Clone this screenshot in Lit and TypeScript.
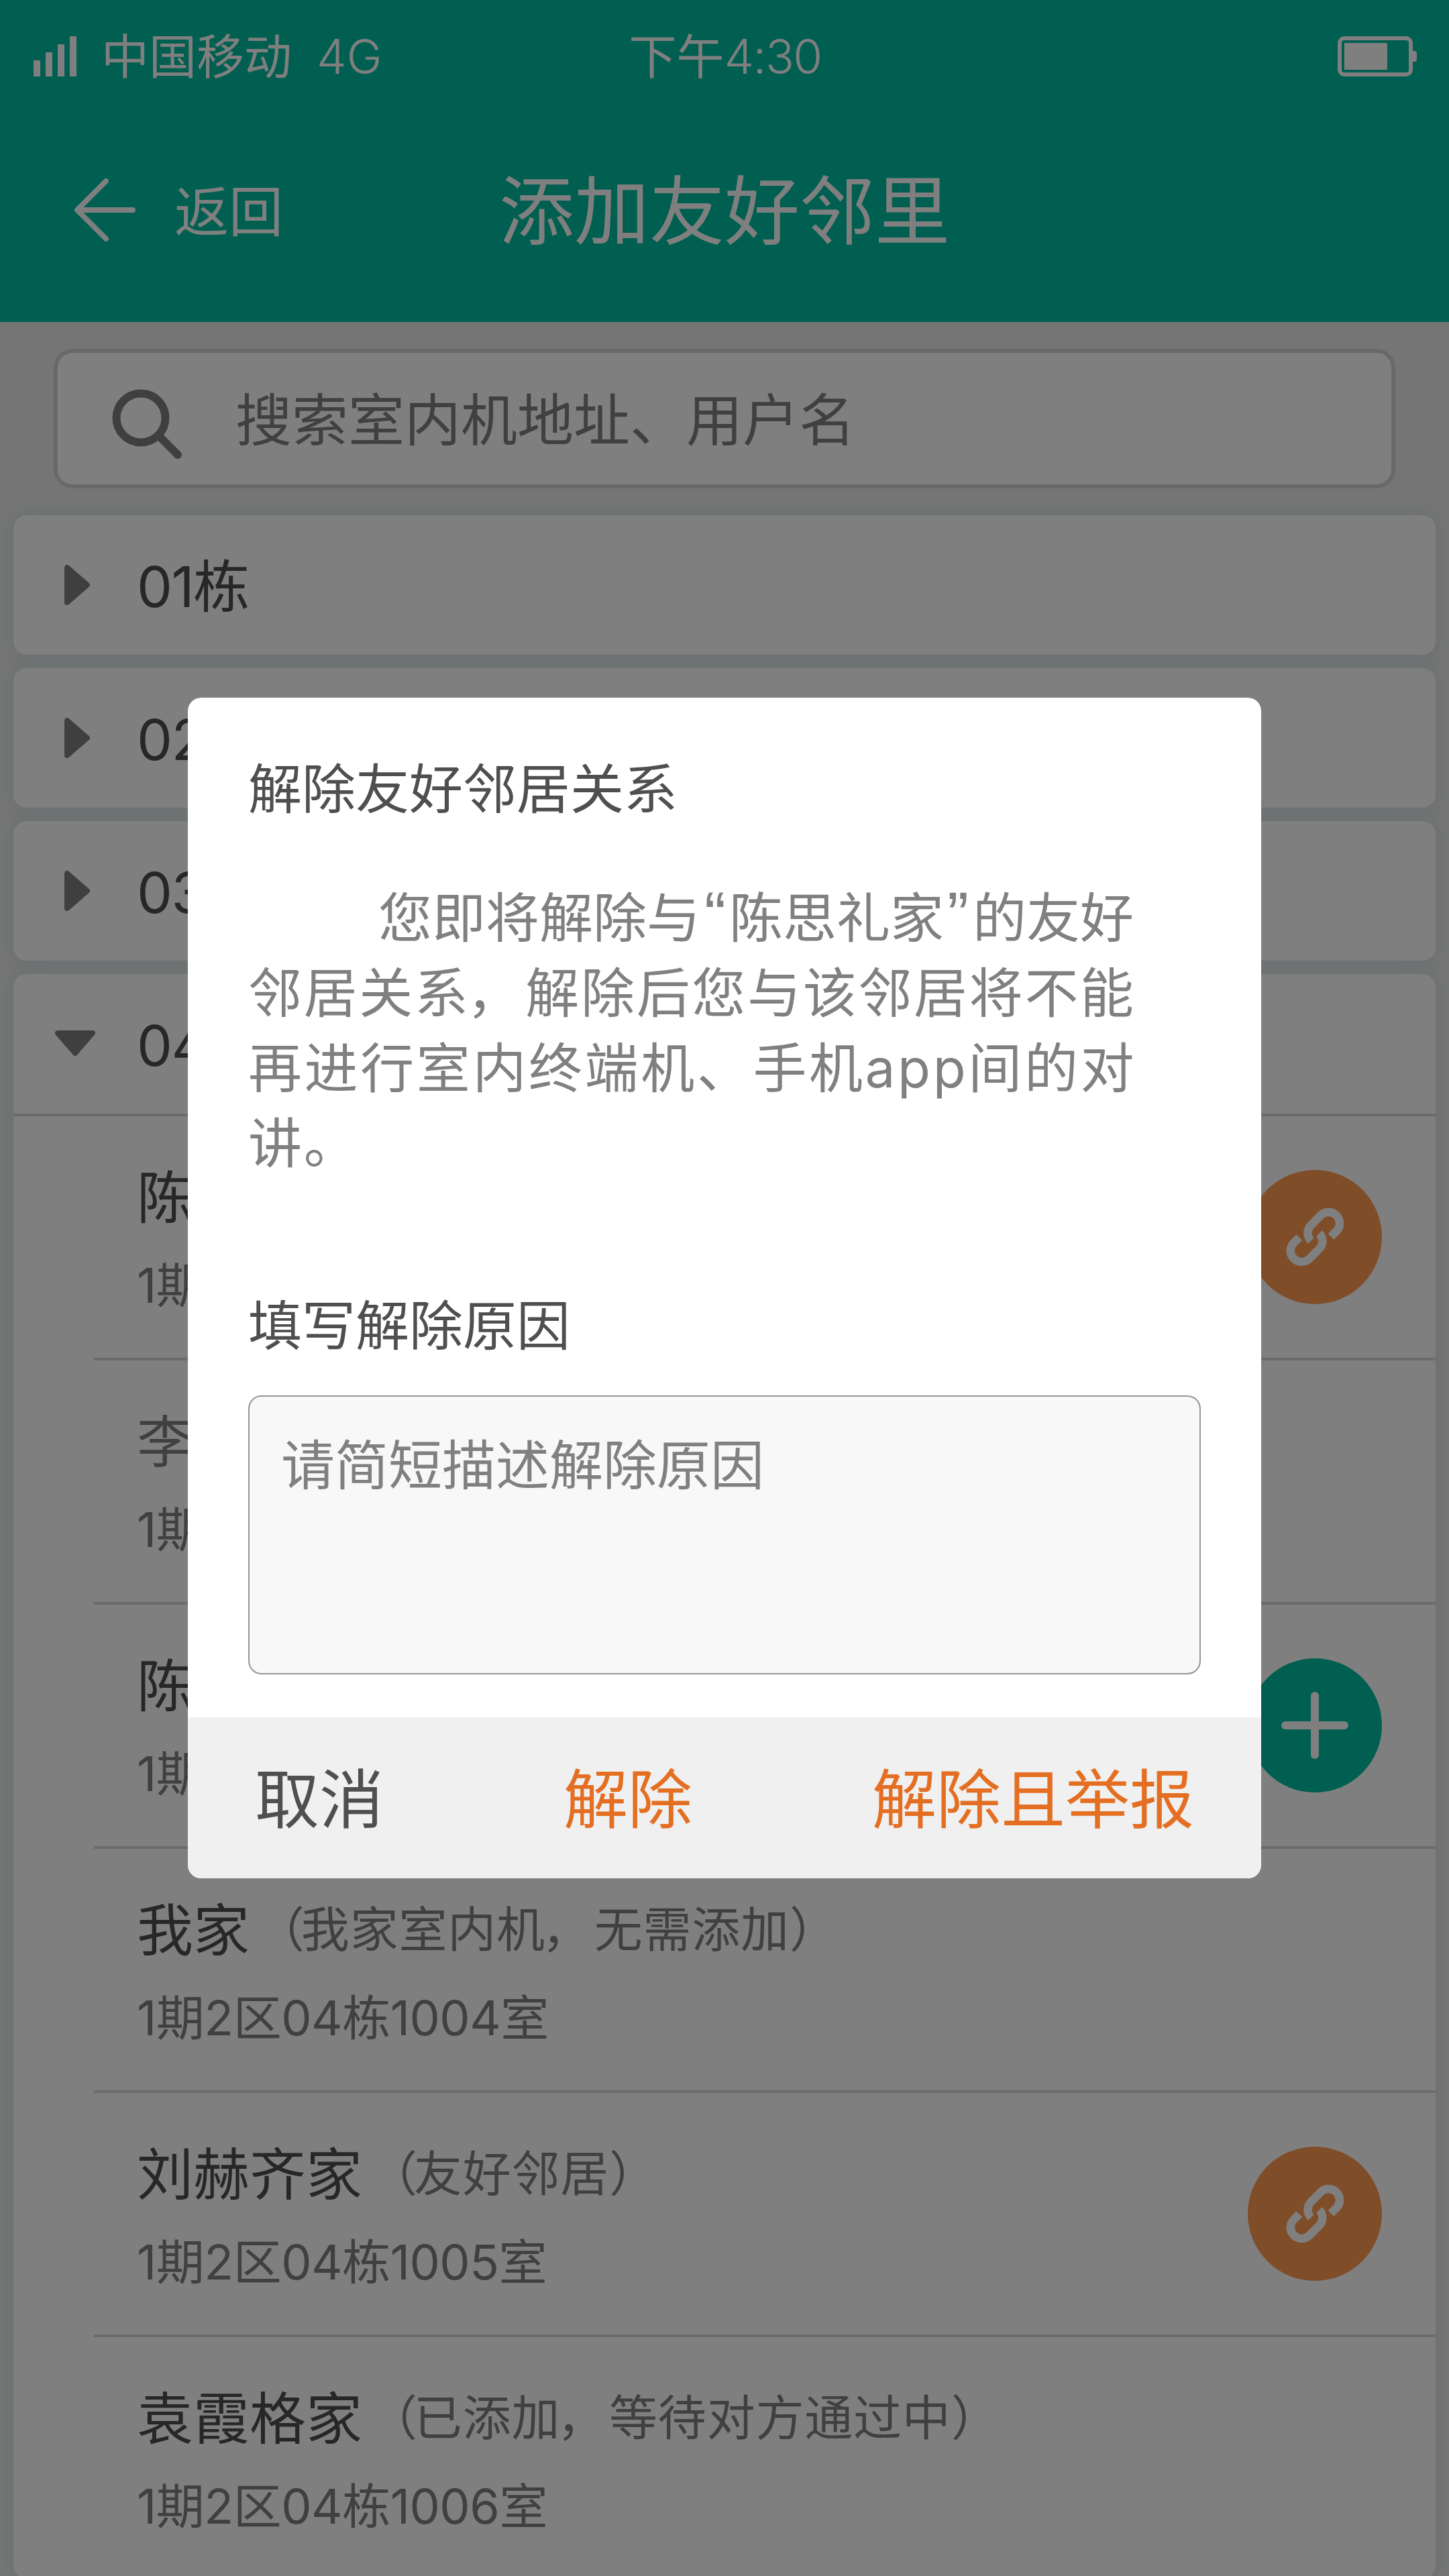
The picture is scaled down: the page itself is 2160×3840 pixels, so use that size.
import { LitElement, html, css, svg, nothing } from "lit";
import { customElement, property } from "lit/decorators.js";
import { classMap } from "lit/directives/class-map.js";

type Action = "link" | "add" | "none";

interface Neighbour {
  name: string;
  note?: string;
  room: string;
  muted?: boolean;
  action: Action;
}

const neighbours: Neighbour[] = [
  { name: "陈", room: "1期", action: "link" },
  { name: "李", room: "1期", muted: true, action: "none" },
  { name: "陈", room: "1期", action: "add" },
  { name: "我家", note: "（我家室内机，无需添加）", room: "1期2区04栋1004室", action: "none" },
  { name: "刘赫齐家", note: "（友好邻居）", room: "1期2区04栋1005室", action: "link" },
  { name: "袁霞格家", note: "（已添加，等待对方通过中）", room: "1期2区04栋1006室", action: "none" },
];

const linkHalf = "M94.3 105.7A16.6 16.6 0 0 1 94.3 82.3L109.7 66.9A16.6 16.6 0 0 1 133.1 90.3L124 99.4";

const punctuate = (text: string) =>
  text.split(/([（，])/).filter(Boolean).map((part) =>
    part === "（" ? html`<span class="open">（</span>`
      : part === "，" ? html`<span class="comma">，</span>`
      : part);

@customElement("round-action")
class RoundAction extends LitElement {
  static styles = css`
    :host { display: block; width: 200px; height: 200px; flex: none; }
    svg { display: block; width: 200px; height: 200px; }
    .link-bg { fill: #ff9a50; }
    .add-bg { fill: #00bfa0; }
    .stroke { fill: none; stroke: #fff; stroke-width: 12.4; }
    .round { stroke-linecap: round; stroke-width: 12; }
  `;
  @property() kind: Action = "link";

  render() {
    return html`<svg viewBox="0 0 200 200">
      ${this.kind === "link"
        ? svg`<circle class="link-bg" cx="100" cy="100" r="100"/>
            <path class="stroke" d=${linkHalf}/>
            <path class="stroke" d=${linkHalf} transform="rotate(180 100.4 100)"/>`
        : svg`<circle class="add-bg" cx="100" cy="100" r="100"/>
            <path class="stroke round" d="M56 100H144M100 56V144"/>`}
    </svg>`;
  }
}

@customElement("neighbour-row")
class NeighbourRow extends LitElement {
  static styles = css`
    :host { display: block; }
    .row { display: flex; align-items: center; justify-content: space-between;
      height: 360px; box-sizing: border-box; padding: 0 80px 0 64px; margin-left: 120px; }
    .info { display: flex; flex-direction: column; padding-top: 13px; }
    .name { display: flex; align-items: center; height: 132px; font-size: 84px; line-height: 132px;
      color: #4f4f4f; white-space: nowrap; }
    .muted { color: #808080; }
    .note { font-size: 72px; letter-spacing: 0.8px; color: #808080; margin: -3px 0 0 4px; }
    .open { margin: 0 -6px 0 6px; }
    .comma { margin: 0 5px 0 -5px; }
    .room { margin-top: -2px; font-size: 72px; line-height: 132px; letter-spacing: -0.5px;
      color: #808080; white-space: nowrap; }
  `;
  @property({ attribute: false }) data!: Neighbour;

  render() {
    const d = this.data;
    return html`<div class="row">
      <div class="info">
        <div class=${classMap({ name: true, muted: !!d.muted })}>${d.name}${d.note
          ? html`<span class="note">${punctuate(d.note)}</span>`
          : nothing}</div>
        <div class="room">${d.room}</div>
      </div>
      ${d.action === "none" ? nothing : html`<round-action .kind=${d.action}></round-action>`}
    </div>`;
  }
}

@customElement("reason-dialog")
class ReasonDialog extends LitElement {
  static styles = css`
    :host { display: block; }
    .dialog { width: 1600px; height: 1760px; border-radius: 20px; overflow: hidden;
      background: #fff; display: flex; flex-direction: column; }
    .body { flex: 1; padding: 80px 90px 64px; display: flex; flex-direction: column; }
    .heading { font-size: 80px; line-height: 112px; color: #4f4f4f; }
    .text { margin-top: 80px; font-size: 80px; line-height: 112px; color: #808080; }
    .line { height: 112px; white-space: nowrap; }
    .first { padding-left: 194px; letter-spacing: 0px; }
    .quote { font-family: "Liberation Sans", sans-serif; font-size: 96px; line-height: 0; }
    .lead { padding-left: 6px; padding-right: 5px; }
    .trail { padding-left: 5px; padding-right: 6px; }
    .comma { margin: 0 5px 0 -5px; }
    .wide { letter-spacing: 2.67px; }
    .wider { letter-spacing: 3.6px; }
    .label { margin-top: 160px; }
    .field { margin-top: 48px; height: 416px; box-sizing: border-box; border: 2px solid #969696;
      border-radius: 20px; background: #f8f8f8; padding: 46px 47px; font-size: 80px;
      line-height: 112px; color: #808080; }
    .footer { height: 240px; background: #f0f0f0; display: flex; align-items: center;
      justify-content: space-between; padding: 4px 100px 0; box-sizing: border-box;
      font-size: 96px; line-height: 140px; color: #4f4f4f; }
    .accent { color: #e46f22; }
  `;

  render() {
    return html`<div class="dialog">
      <div class="body">
        <div class="heading">解除友好邻居关系</div>
        <div class="text">
          <div class="line first">您即将解除与<span class="quote lead">“</span>陈思礼家<span class="quote trail">”</span>的友好</div>
          <div class="line wide">${punctuate("邻居关系，解除后您与该邻居将不能")}</div>
          <div class="line wider">再进行室内终端机、手机app间的对</div>
          <div class="line wide">讲。</div>
        </div>
        <div class="heading label">填写解除原因</div>
        <div class="field">请简短描述解除原因</div>
      </div>
      <div class="footer">
        <span>取消</span>
        <span class="accent">解除</span>
        <span class="accent">解除且举报</span>
      </div>
    </div>`;
  }
}

@customElement("app-root")
class AppRoot extends LitElement {
  static styles = css`
    :host { display: block; font-family: Inter, "Noto Sans CJK SC", sans-serif; }
    .screen { position: relative; width: 2160px; height: 3840px; overflow: hidden;
      background: #ebebeb; }
    .top { height: 480px; background: #00bfa0; color: #fff; }
    .status { display: grid; grid-template-columns: 1fr auto 1fr; align-items: center;
      height: 168px; padding: 0 48px 0 50px; font-size: 71px; line-height: 100px;
      box-sizing: border-box; }
    .left { display: flex; align-items: center; }
    .signal { width: 64px; height: 60px; margin-right: 37px; fill: #fff; }
    .net { margin-left: 37px; font-weight: 350; }
    .digits { font-weight: 350; letter-spacing: -1.6px; }
    .battery { width: 118px; height: 60px; justify-self: end; }
    .nav { display: grid; grid-template-columns: 1fr auto 1fr; align-items: center;
      height: 292px; padding: 0 108px; }
    .back { display: flex; align-items: center; font-size: 81px; line-height: 120px; }
    .back span { padding-top: 3px; }
    .arrow { width: 98px; height: 100px; margin-right: 54px; }
    .title { font-size: 112px; line-height: 160px; padding-top: 2px; }
    .search { display: flex; align-items: center; box-sizing: border-box; height: 208px;
      margin: 40px 80px; border: 6px solid #d3d3d3; border-radius: 28px; background: #fff;
      padding-left: 76px; font-size: 84px; line-height: 120px; color: #808080; }
    .search span { padding-top: 6px; }
    .glass { width: 116px; height: 116px; margin: 18px 73px 0 0; }
    .list { display: flex; flex-direction: column; gap: 20px; padding: 0 20px; }
    .card { background: #fff; border-radius: 20px; box-shadow: 0 0 32px rgba(0, 140, 140, 0.12); }
    .building { display: flex; align-items: center; height: 208px; padding-left: 56px;
      font-size: 84px; line-height: 120px; color: #4f4f4f; }
    .building span { padding-top: 5px; letter-spacing: -1.5px; }
    .caret { width: 80px; height: 80px; margin-right: 48px; fill: #7f7f7f; stroke: #7f7f7f;
      stroke-width: 8; stroke-linejoin: round; }
    .rule { height: 4px; background: #d6d6d6; }
    .inset { margin-left: 120px; }
    .dim { position: absolute; inset: 0; background: rgba(0, 0, 0, 0.5); display: flex;
      align-items: center; justify-content: center; }
  `;

  private building(label: string, open = false) {
    return html`<div class="building">
      <svg class="caret" viewBox="0 0 80 80">
        <path d=${open ? "M10 24H62L36 54Z" : "M24 14V66L54 40Z"}/>
      </svg>
      <span>${label}</span>
    </div>`;
  }

  render() {
    return html`<div class="screen">
      <div class="top">
        <div class="status">
          <div class="left">
            <svg class="signal" viewBox="0 0 64 60">
              <path d="M0 36h10v24h-10zM18 24h10v36h-10zM36 12h10v48h-10zM54 0h10v60h-10z"/>
            </svg>
            <span>中国移动</span><span class="net">4G</span>
          </div>
          <div>下午<span class="digits">4:30</span></div>
          <svg class="battery" viewBox="0 0 118 60">
            <rect x="3" y="3" width="106" height="54" rx="7" fill="none" stroke="#fff" stroke-width="6"/>
            <rect x="10" y="10" width="64" height="40" fill="#fff"/>
            <path d="M112 22h2a4 4 0 0 1 4 4v8a4 4 0 0 1-4 4h-2z" fill="#fff"/>
          </svg>
        </div>
        <div class="nav">
          <div class="back">
            <svg class="arrow" viewBox="0 0 98 100" fill="none" stroke="#fff" stroke-width="8"
              stroke-linecap="round" stroke-linejoin="round">
              <path d="M90 49H8M50 6L7 49L50 92"/>
            </svg>
            <span>返回</span>
          </div>
          <div class="title">添加友好邻里</div>
        </div>
      </div>
      <div class="search">
        <svg class="glass" viewBox="0 0 116 116" fill="none" stroke="#7f7f7f">
          <circle cx="48" cy="48" r="36.5" stroke-width="12"/>
          <path d="M76 76L103 103" stroke-width="12" stroke-linecap="round"/>
        </svg>
        <span>搜索室内机地址、用户名</span>
      </div>
      <div class="list">
        ${["01栋", "02栋", "03栋"].map((b) => html`<div class="card">${this.building(b)}</div>`)}
        <div class="card">
          ${this.building("04栋", true)}
          <div class="rule"></div>
          ${neighbours.map((n, i) => html`
            ${i ? html`<div class="rule inset"></div>` : nothing}
            <neighbour-row .data=${n}></neighbour-row>`)}
        </div>
      </div>
      <div class="dim"><reason-dialog></reason-dialog></div>
    </div>`;
  }
}
